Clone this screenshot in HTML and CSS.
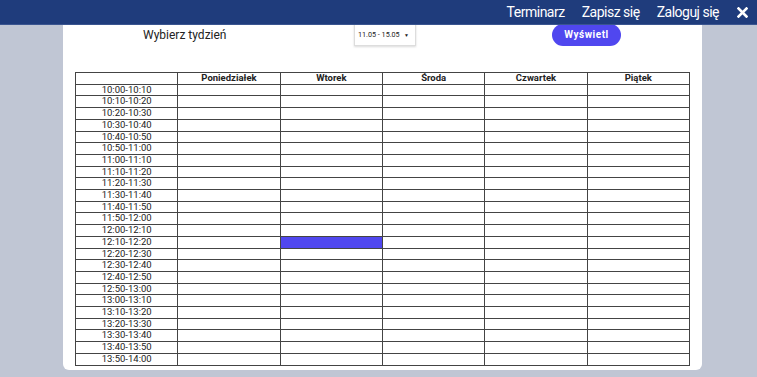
FILE: index.html
```html
<!DOCTYPE html>
<html lang="pl">
<head>
    <meta charset="UTF-8">
    <meta name="viewport" content="width=device-width, initial-scale=1.0">
    <title>Terminarz</title>
    <link rel="stylesheet" href="styles.css">
</head>
<body>
    <header class="topbar">
        <nav class="nav">
            <a href="#">Terminarz</a>
            <a href="#">Zapisz się</a>
            <a href="#">Zaloguj się</a>
            <a href="#" class="close">
                <svg width="11" height="11" viewBox="0 0 11 11">
                    <path d="M1.5 1.5 L9.5 9.5 M9.5 1.5 L1.5 9.5" stroke="#fff" stroke-width="2.6" stroke-linecap="square"/>
                </svg>
            </a>
        </nav>
    </header>

    <main class="card">
        <div class="controls">
            <span class="label">Wybierz tydzień</span>
            <span class="week-select">11.05 - 15.05 <span class="arrow">&#9660;</span></span>
            <button class="show-btn">Wyświetl</button>
        </div>

        <table class="schedule">
            <thead>
                <tr>
                    <th></th>
                    <th>Poniedziałek</th>
                    <th>Wtorek</th>
                    <th>Środa</th>
                    <th>Czwartek</th>
                    <th>Piątek</th>
                </tr>
            </thead>
            <tbody id="rows"></tbody>
        </table>
    </main>

    <script>
        const rows = document.getElementById('rows');
        const pad = n => String(n).padStart(2, '0');
        const fmt = m => pad(Math.floor(m / 60)) + ':' + pad(m % 60);

        for (let m = 600; m < 840; m += 10) {
            const tr = document.createElement('tr');
            const time = document.createElement('td');
            time.textContent = fmt(m) + '-' + fmt(m + 10);
            tr.appendChild(time);
            for (let d = 0; d < 5; d++) {
                const td = document.createElement('td');
                if (m === 730 && d === 1) td.className = 'booked';
                tr.appendChild(td);
            }
            rows.appendChild(tr);
        }
    </script>
</body>
</html>
```

FILE: styles.css
```css
* {
    margin: 0;
    padding: 0;
    box-sizing: border-box;
}
body {
    background: #c0c6d4;
    font-family: Roboto, 'Liberation Sans', sans-serif;
    color: #222;
}
.topbar {
    position: fixed;
    top: 0;
    left: 0;
    right: 0;
    height: 25px;
    background: #1f3c7c;
    border-bottom: 1px solid #3a5590;
    z-index: 10;
}
.nav {
    display: flex;
    justify-content: flex-end;
    align-items: center;
    height: 24px;
    gap: 17px;
    padding-right: 9px;
}
.nav a {
    color: #fff;
    text-decoration: none;
    font-size: 14px;
    letter-spacing: -0.5px;
}
.nav .close {
    display: flex;
    margin-left: 1px;
}
.card {
    margin-left: 63px;
    width: 639px;
    height: 370px;
    background: #fff;
    border-radius: 0 0 6px 6px;
    padding: 23px 0 0 12px;
}
.controls {
    display: grid;
    grid-template-columns: 279px 198px 69px;
    align-items: center;
    height: 23px;
}
.label {
    font-size: 12px;
    padding-left: 68px;
    padding-top: 1px;
}
.week-select {
    display: flex;
    align-items: center;
    justify-content: space-between;
    width: 62px;
    height: 23px;
    border: 1px solid #ddd;
    box-shadow: 0 1px 2px rgba(0, 0, 0, 0.15);
    font-size: 7.2px;
    padding: 0 6px 0 3px;
    white-space: pre;
}
.arrow {
    font-size: 5px;
}
.show-btn {
    height: 22px;
    width: 69px;
    border: none;
    border-radius: 11px;
    background: #5047ef;
    color: #fff;
    font-family: Roboto, sans-serif;
    font-weight: bold;
    font-size: 10px;
    letter-spacing: 0.5px;
}
.schedule {
    margin-top: 26px;
    width: 615px;
    table-layout: fixed;
    border-collapse: collapse;
}
.schedule th,
.schedule td {
    border: 1px solid #444;
    padding: 0;
    line-height: 10.7px;
    font-size: 9.5px;
    text-align: center;
    font-weight: normal;
}
.schedule th {
    font-weight: bold;
}
.schedule td.booked {
    background: #5047ef;
}
```
